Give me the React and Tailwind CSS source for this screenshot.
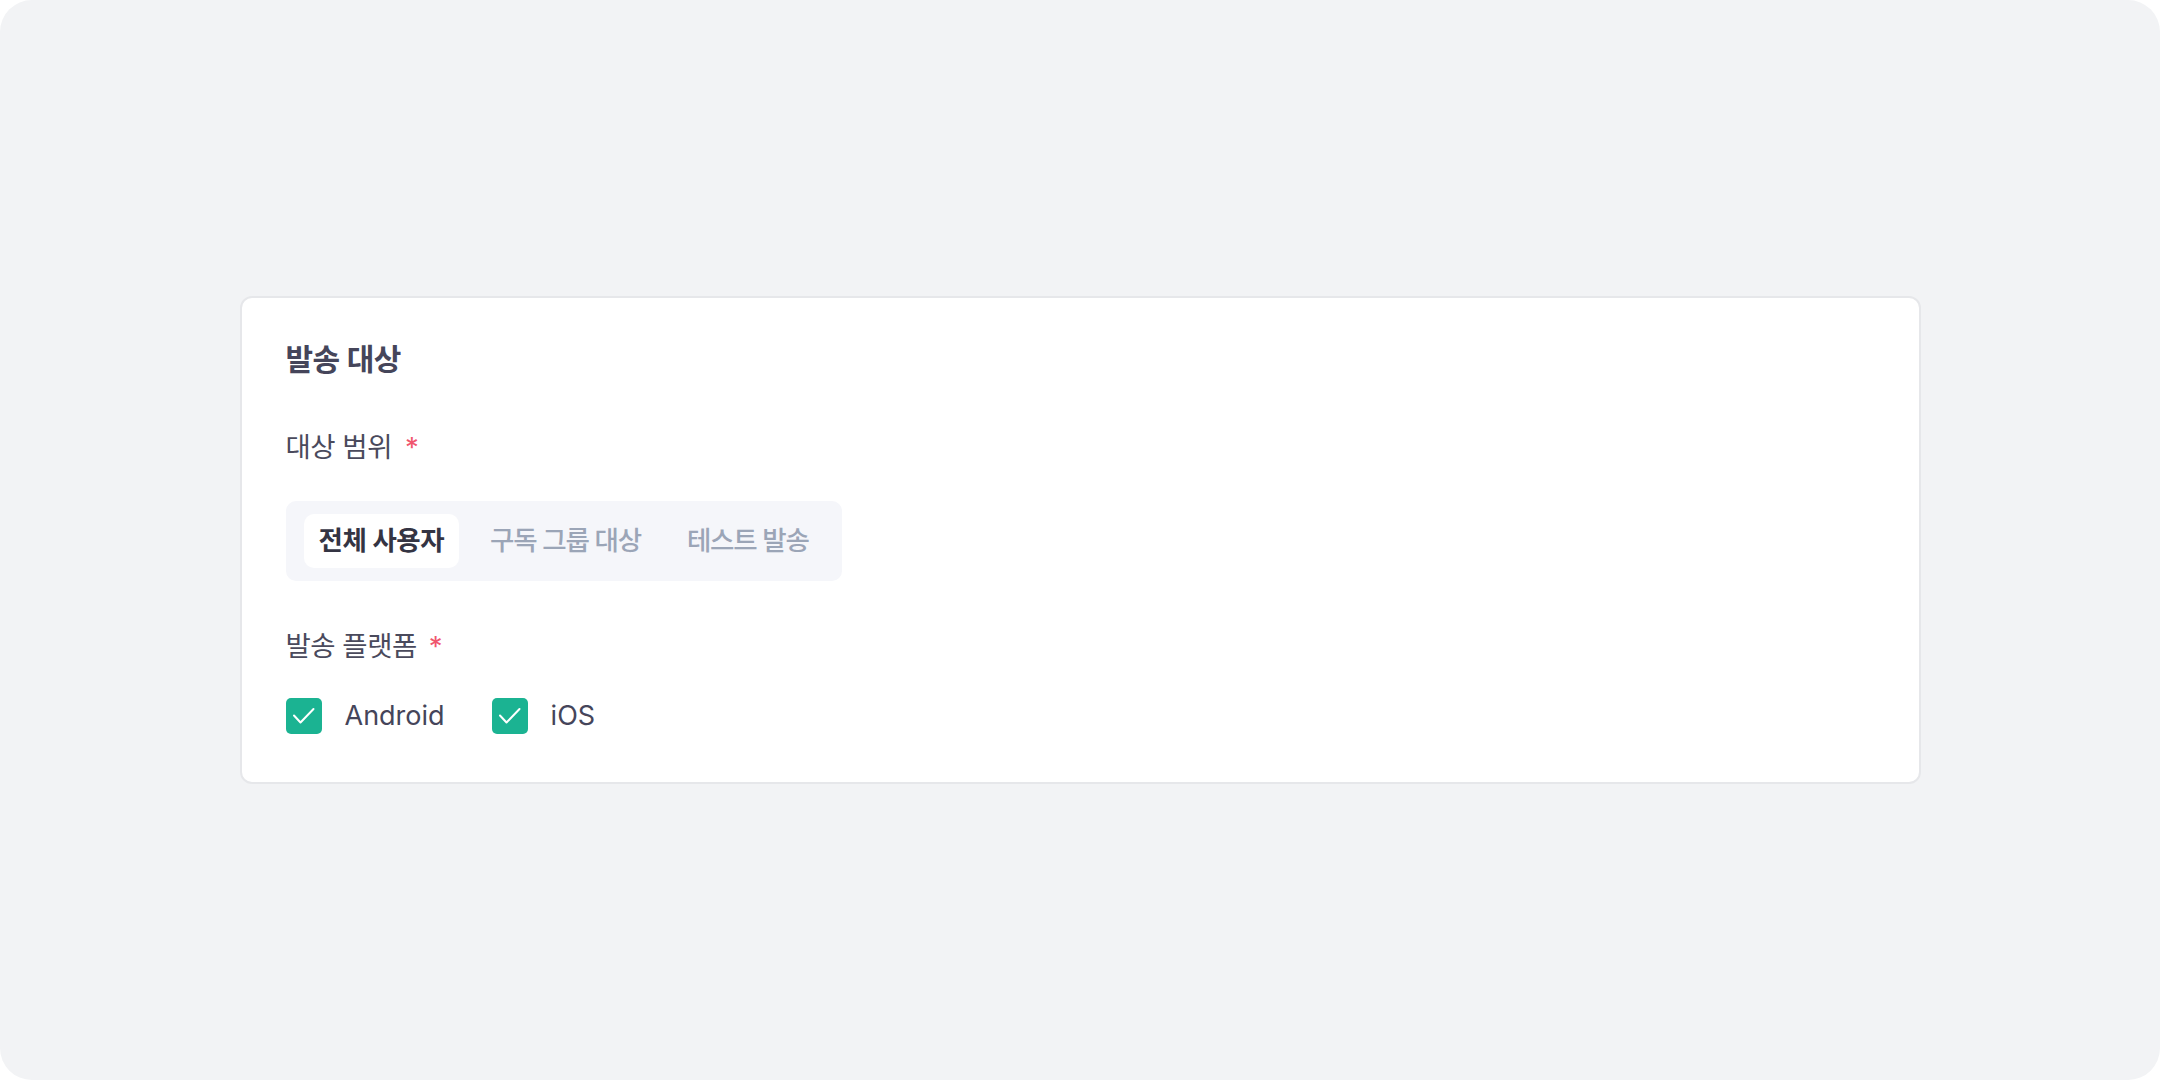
export default function App() {
  const font = { fontFamily: '"Inter", "Noto Sans CJK KR", sans-serif' };
  const Check = () => (
    <div className="w-[36px] h-[36px] rounded-[5px] bg-[#1bb392]">
      <svg width="36" height="36" viewBox="0 0 36 36" fill="none">
        <path d="M8 17.5 L14.5 24.5 L27.5 11" stroke="white" strokeWidth="2" strokeLinecap="round" strokeLinejoin="round" />
      </svg>
    </div>
  );
  return (
    <div className="bg-white" style={font}>
      <div className="h-[1080px] w-[2160px] bg-[#f2f3f5] rounded-[32px] flex items-center justify-center">
        <div className="w-[1681px] h-[488px] bg-white border-2 border-[#e6e7ea] rounded-[12px] pl-[44px] pt-[40px]">
          <h2 className="text-[30px] leading-[42px] font-semibold text-[#45455a] tracking-[-0.5px]">발송 대상</h2>
          <div className="mt-[48px] flex items-center text-[27.5px] leading-[38px] text-[#4a4a5c] tracking-[-0.5px]">
            <span>대상 범위</span>
            <span className="ml-[13px] text-[#f0566e]">*</span>
          </div>
          <div className="mt-[35px] inline-flex gap-[16px] bg-[#f5f6fa] rounded-[10px] px-[18px] py-[13px] text-[26.5px]">
            <div className="h-[54px] px-[15px] flex items-center rounded-[10px] bg-white font-semibold text-[#343443] tracking-[-0.5px]">전체 사용자</div>
            <div className="h-[54px] px-[15px] flex items-center rounded-[10px] font-medium text-[#9ba5b7] tracking-[-1.2px]">구독 그룹 대상</div>
            <div className="h-[54px] px-[15px] flex items-center rounded-[10px] font-medium text-[#9ba5b7] tracking-[-1.2px]">테스트 발송</div>
          </div>
          <div className="mt-[46px] flex items-center text-[27.5px] leading-[38px] text-[#4a4a5c] tracking-[-0.5px]">
            <span>발송 플랫폼</span>
            <span className="ml-[12px] text-[#f0566e]">*</span>
          </div>
          <div className="mt-[31px] flex items-center">
            <label className="flex items-center gap-[23px]">
              <Check />
              <span className="text-[27px] text-[#45455a]">Android</span>
            </label>
            <label className="flex items-center gap-[23px] ml-[47px]">
              <Check />
              <span className="text-[27px] text-[#45455a]">iOS</span>
            </label>
          </div>
        </div>
      </div>
    </div>
  );
}
